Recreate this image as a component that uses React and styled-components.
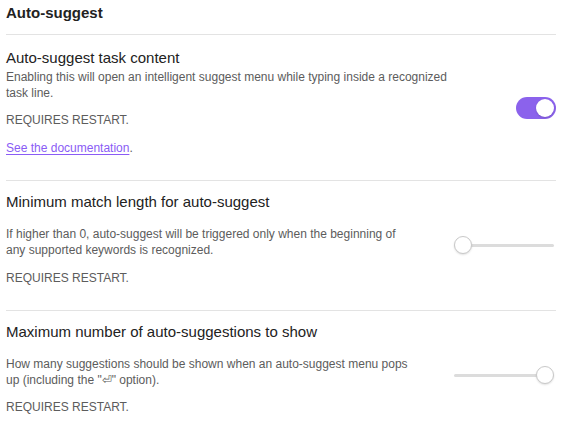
import React from "react";
import styled, { createGlobalStyle } from "styled-components";

const Global = createGlobalStyle`
  html, body { margin: 0; padding: 0; background: #ffffff; }
  body { font-family: "Liberation Sans", Arial, sans-serif; color: #222222; -webkit-font-smoothing: antialiased; }
`;

const Page = styled.div`
  padding: 0 10px 0 6px;
  width: 566px;
  box-sizing: border-box;
`;

const Heading = styled.div`
  padding: 3px 0 11px;
  font-size: 15px;
  line-height: 20px;
  font-weight: 700;
  color: #222222;
`;

const Item = styled.div`
  display: flex;
  align-items: center;
  border-top: 1px solid #e3e3e3;
  padding: ${(p) => (p.$first ? "13px" : "11px")} 0 12px;
`;

const Info = styled.div`
  flex: 1 1 auto;
  max-width: ${(p) => p.$max}px;
`;

const Name = styled.div`
  font-size: 15px;
  line-height: 20px;
  color: #222222;
`;

const Description = styled.div`
  padding-top: 2px;
  font-size: 12px;
  line-height: 15.6px;
  color: #5c5c5c;
`;

const Para = styled.p`
  margin: 12px 0;
  margin-top: ${(p) => (p.$lead ? "0" : p.$top ? "13px" : "12px")};
`;

const Link = styled.a`
  color: #8a5cf5;
  text-decoration: underline;
  text-underline-offset: 2px;
`;

const Control = styled.div`
  margin-left: auto;
  display: flex;
  align-items: center;
  justify-content: flex-end;
`;

const Toggle = styled.div`
  width: 40px;
  height: 22px;
  border-radius: 11px;
  background: ${(p) => (p.$on ? "#8b62ec" : "#d9d9d9")};
  display: flex;
  align-items: center;
  justify-content: ${(p) => (p.$on ? "flex-end" : "flex-start")};
  padding: 0 2px;
  box-sizing: border-box;
`;

const Knob = styled.div`
  width: 18px;
  height: 18px;
  border-radius: 50%;
  background: #ffffff;
  box-shadow: 0 1px 2px rgba(0, 0, 0, 0.15);
`;

const SliderBox = styled.div`
  position: relative;
  width: 100px;
  height: 20px;
  margin-right: 2px;
  display: flex;
  align-items: center;
`;

const Track = styled.div`
  width: 100%;
  height: 3px;
  border-radius: 2px;
  background: #dcdcdc;
`;

const Thumb = styled.div`
  position: absolute;
  top: 1px;
  width: 18px;
  height: 18px;
  box-sizing: border-box;
  border-radius: 50%;
  background: #ffffff;
  border: 1px solid #c9c9c9;
  box-shadow: 0 1px 2px rgba(0, 0, 0, 0.12);
`;

function Slider({ value }) {
  return (
    <SliderBox>
      <Track />
      <Thumb style={{ left: `calc(${value * 100}% - ${value * 18}px)` }} />
    </SliderBox>
  );
}

export default function App() {
  return (
    <>
      <Global />
      <Page>
        <Heading>Auto-suggest</Heading>
        <Item $first>
          <Info $max={452}>
            <Name>Auto-suggest task content</Name>
            <Description>
              <Para $lead>
                Enabling this will open an intelligent suggest menu while typing inside a recognized task line.
              </Para>
              <Para>REQUIRES RESTART.</Para>
              <Para>
                <Link href="#">See the documentation</Link>.
              </Para>
            </Description>
          </Info>
          <Control>
            <Toggle $on>
              <Knob />
            </Toggle>
          </Control>
        </Item>
        <Item>
          <Info $max={408}>
            <Name>Minimum match length for auto-suggest</Name>
            <Description>
              <Para $top>
                If higher than 0, auto-suggest will be triggered only when the beginning of any supported keywords is recognized.
              </Para>
              <Para>REQUIRES RESTART.</Para>
            </Description>
          </Info>
          <Control>
            <Slider value={0} />
          </Control>
        </Item>
        <Item>
          <Info $max={408}>
            <Name>Maximum number of auto-suggestions to show</Name>
            <Description>
              <Para $top>
                How many suggestions should be shown when an auto-suggest menu pops up (including the "⏎" option).
              </Para>
              <Para>REQUIRES RESTART.</Para>
            </Description>
          </Info>
          <Control>
            <Slider value={1} />
          </Control>
        </Item>
      </Page>
    </>
  );
}
